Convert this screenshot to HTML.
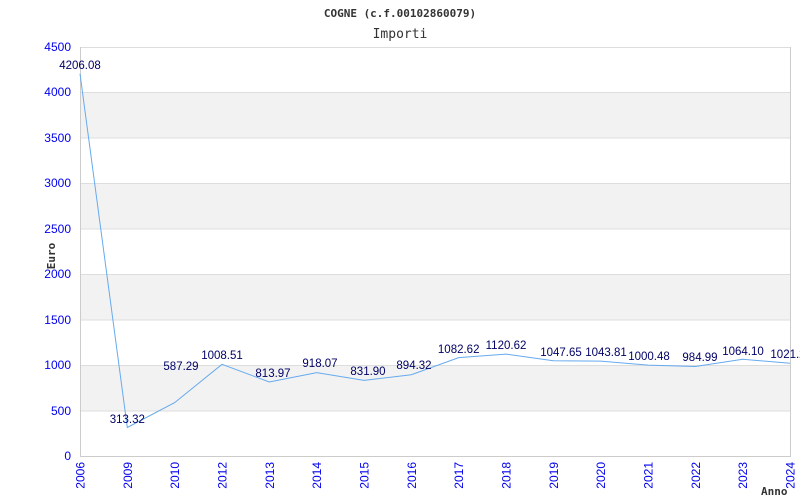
<!DOCTYPE html>
<html><head><meta charset="utf-8"><style>
html,body{margin:0;padding:0;background:#fff;width:800px;height:500px;overflow:hidden}
svg text{font-family:"Liberation Sans",sans-serif}
.m{font-family:"DejaVu Sans Mono","Liberation Mono",monospace}
</style></head><body>
<svg width="800" height="500" xmlns="http://www.w3.org/2000/svg">
<rect x="80" y="92.4" width="710" height="45.5" fill="#f2f2f2"/>
<rect x="80" y="183.3" width="710" height="45.5" fill="#f2f2f2"/>
<rect x="80" y="274.2" width="710" height="45.5" fill="#f2f2f2"/>
<rect x="80" y="365.1" width="710" height="45.5" fill="#f2f2f2"/>
<g stroke="#dddddd" stroke-width="1">
<line x1="80" y1="47.5" x2="790" y2="47.5"/><line x1="80" y1="92.5" x2="790" y2="92.5"/>
<line x1="80" y1="138" x2="790" y2="138"/><line x1="80" y1="183.5" x2="790" y2="183.5"/>
<line x1="80" y1="229" x2="790" y2="229"/><line x1="80" y1="274.5" x2="790" y2="274.5"/>
<line x1="80" y1="320" x2="790" y2="320"/><line x1="80" y1="365.5" x2="790" y2="365.5"/>
<line x1="80" y1="411" x2="790" y2="411"/>
</g>
<g stroke="#cccccc" stroke-width="1" fill="none">
<line x1="80.5" y1="47" x2="80.5" y2="456"/><line x1="790.5" y1="47" x2="790.5" y2="456.5"/>
<line x1="80" y1="456.5" x2="791" y2="456.5"/>
</g>
<polyline fill="none" stroke="#66aaee" stroke-width="1" points="80,73.7 127.3,427.5 174.7,402.6 222,364.3 269.3,382 316.7,372.6 364,380.4 411.3,374.7 458.7,357.6 506,354.1 553.3,360.8 600.7,361.1 648,365.1 695.3,366.5 742.7,359.3 790,363.2"/>
<g font-size="11.5" fill="#000066" text-anchor="middle">
<text x="80" y="69">4206.08</text><text x="127.3" y="423">313.32</text>
<text x="181" y="370">587.29</text><text x="222" y="359">1008.51</text>
<text x="273" y="377">813.97</text><text x="320" y="367">918.07</text>
<text x="368" y="375">831.90</text><text x="414" y="369">894.32</text>
<text x="458.7" y="353">1082.62</text><text x="506" y="349">1120.62</text>
<text x="561" y="356">1047.65</text><text x="606" y="356">1043.81</text>
<text x="649" y="360">1000.48</text><text x="700" y="361">984.99</text>
<text x="743" y="355">1064.10</text><text x="788" y="358">1021.2</text>
</g>
<g font-size="12" fill="#0000ee" text-anchor="end">
<text x="71" y="51">4500</text><text x="71" y="96">4000</text><text x="71" y="142">3500</text>
<text x="71" y="187">3000</text><text x="71" y="233">2500</text><text x="71" y="278">2000</text>
<text x="71" y="324">1500</text><text x="71" y="369">1000</text><text x="71" y="415">500</text>
<text x="71" y="460">0</text>
</g>
<g font-size="12" fill="#0000ee" text-anchor="end">
<text transform="translate(84.5,462) rotate(-90)">2006</text>
<text transform="translate(131.8,462) rotate(-90)">2009</text>
<text transform="translate(179.2,462) rotate(-90)">2010</text>
<text transform="translate(226.5,462) rotate(-90)">2012</text>
<text transform="translate(273.8,462) rotate(-90)">2013</text>
<text transform="translate(321.2,462) rotate(-90)">2014</text>
<text transform="translate(368.5,462) rotate(-90)">2015</text>
<text transform="translate(415.8,462) rotate(-90)">2016</text>
<text transform="translate(463.2,462) rotate(-90)">2017</text>
<text transform="translate(510.5,462) rotate(-90)">2018</text>
<text transform="translate(557.8,462) rotate(-90)">2019</text>
<text transform="translate(605.2,462) rotate(-90)">2020</text>
<text transform="translate(652.5,462) rotate(-90)">2021</text>
<text transform="translate(699.8,462) rotate(-90)">2022</text>
<text transform="translate(747.2,462) rotate(-90)">2023</text>
<text transform="translate(794.5,462) rotate(-90)">2024</text>
</g>
<text class="m" x="400" y="17" font-size="11" font-weight="bold" fill="#333" text-anchor="middle">COGNE (c.f.00102860079)</text>
<text class="m" x="400" y="38" font-size="13" fill="#333" text-anchor="middle">Importi</text>
<text class="m" transform="translate(55,256) rotate(-90)" font-size="11" font-weight="bold" fill="#333" text-anchor="middle">Euro</text>
<text class="m" x="761" y="495" font-size="11" font-weight="bold" fill="#333">Anno</text>
</svg>
</body></html>
